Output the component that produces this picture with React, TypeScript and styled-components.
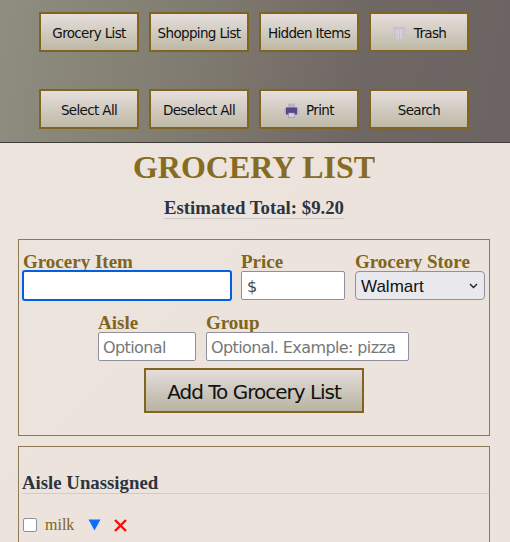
import styled, { createGlobalStyle } from "styled-components";

const GlobalStyle = createGlobalStyle`
  html, body {
    margin: 0;
    padding: 0;
    height: 542px;
    overflow: hidden;
  }
  body {
    background: linear-gradient(135deg, #ede5df 0%, #ebe3dc 50%, #ebe4dd 100%);
    font-family: "Liberation Serif", "Times New Roman", serif;
  }
`;

const Header = styled.header`
  display: grid;
  grid-template-columns: repeat(4, 100px);
  column-gap: 10px;
  row-gap: 37px;
  padding: 12px 0 13px 39px;
  background: linear-gradient(100deg, #8f8e80 0%, #7f7a6f 40%, #6f6764 70%, #6b6462 100%);
  border-bottom: 1px solid #3f3a38;
`;

const NavButton = styled.button`
  display: flex;
  align-items: center;
  justify-content: center;
  gap: 7px;
  height: 40px;
  margin: 0;
  padding: 2px 0 0;
  box-sizing: border-box;
  border: 2px solid #7f6520;
  background: linear-gradient(180deg, #e6dedd 0%, #bdb9a5 100%);
  color: #111;
  font-family: "DejaVu Sans", Verdana, sans-serif;
  font-size: 13.5px;
  letter-spacing: -0.65px;
  white-space: nowrap;
`;

const Main = styled.main`
  padding: 0 20px 0 18px;
`;

const Title = styled.h1`
  margin: 5px 0 0;
  text-align: center;
  color: #866b22;
  font-size: 32px;
  line-height: 38px;
  font-weight: 700;
`;

const TotalRow = styled.div`
  display: flex;
  justify-content: center;
  margin-top: 12px;
`;

const Total = styled.span`
  color: #2c3440;
  font-size: 18.8px;
  line-height: 20px;
  font-weight: 700;
  border-bottom: 1px solid #c9c8c8;
`;

const Box = styled.section`
  box-sizing: border-box;
  width: 472px;
  border: 1px solid #8b7a55;
`;

const FormBox = styled(Box)`
  margin-top: 20px;
  height: 197px;
  padding: 11px 4px 0;
`;

const FieldRow = styled.div<{ $indent?: number }>`
  display: flex;
  gap: 10px;
  padding-left: ${({ $indent }) => $indent ?? 0}px;

  & + & {
    margin-top: 12px;
  }
`;

const Field = styled.label`
  display: flex;
  flex-direction: column;
`;

const FieldLabel = styled.span`
  margin-bottom: -2px;
  color: #7f6520;
  font-size: 19px;
  line-height: 22px;
  font-weight: 700;
  white-space: nowrap;
`;

const TextInput = styled.input<{ $width: number; $focused?: boolean }>`
  box-sizing: border-box;
  width: ${({ $width }) => $width}px;
  height: 29px;
  margin: 0;
  padding: 2px 4px 0;
  background: #fff;
  border: 1px solid #8f8f9d;
  border-radius: 2px;
  color: #444;
  font-family: "DejaVu Sans", Verdana, sans-serif;
  font-size: 16px;
  letter-spacing: -0.6px;
  outline: none;

  &::placeholder {
    color: #777;
    opacity: 1;
  }

  ${({ $focused }) =>
    $focused &&
    `
    height: 31px;
    margin: -1px -1px -1px -1px;
    border: 2px solid #0060df;
    border-radius: 3px;
  `}
`;

const PriceInput = styled(TextInput)`
  padding-left: 5px;
`;

const StoreSelect = styled.select`
  appearance: none;
  box-sizing: border-box;
  width: 130px;
  height: 29px;
  margin: 0;
  padding: 2px 1px 0 5px;
  background: #e9e9ed
    url("data:image/svg+xml,%3Csvg xmlns='http://www.w3.org/2000/svg' width='9' height='6'%3E%3Cpath d='M1 1l3.5 3.5L8 1' fill='none' stroke='%23222' stroke-width='1.4'/%3E%3C/svg%3E")
    no-repeat right 6px center;
  border: 1px solid #8f8f9d;
  border-radius: 4px;
  color: #111;
  font-family: "Liberation Sans", Arial, sans-serif;
  font-size: 17px;
`;

const SubmitRow = styled.div`
  display: flex;
  justify-content: center;
  margin-top: 7px;
`;

const SubmitButton = styled.button`
  box-sizing: border-box;
  width: 220px;
  height: 45px;
  margin: 0;
  padding: 2px 0 0;
  border: 2px solid #7f6520;
  background: linear-gradient(180deg, #e3dcdb 0%, #b8b4a0 100%);
  color: #111;
  font-family: "DejaVu Sans", Verdana, sans-serif;
  font-size: 20px;
  letter-spacing: -1px;
`;

const ListBox = styled(Box)`
  margin-top: 10px;
  height: 140px;
  padding: 26px 0 0 3px;
`;

const AisleHeading = styled.h3`
  margin: 0;
  color: #2c3440;
  font-size: 18.8px;
  line-height: 20px;
  font-weight: 700;
  border-bottom: 1px solid #d0ccc6;
`;

const ItemRow = styled.div`
  display: flex;
  align-items: center;
  margin-top: 21px;
  height: 20px;
`;

const Check = styled.input`
  appearance: none;
  box-sizing: border-box;
  width: 14px;
  height: 14px;
  margin: 0 8px 0 1px;
  background: #fff;
  border: 1px solid #8f8f9d;
  border-radius: 2px;
`;

const ItemName = styled.span`
  width: 43px;
  color: #7f6520;
  font-size: 16px;
`;

const ItemAction = styled.button`
  display: flex;
  width: 26px;
  margin: 0;
  padding: 0;
  border: none;
  background: none;
`;

function TrashIcon() {
  return (
    <svg width="15" height="15" viewBox="0 0 15 15">
      <path d="M1 1h13v1.5h-.8l-1 12H2.8l-1-12H1z" fill="#c6c1cd" />
      <path d="M3.5 3.5h8l-.6 9.5H4.1z" fill="#d8d4da" />
      <path d="M4.5 4l1 9M7.5 4v9M10.5 4l-1 9" stroke="#bdb8c4" strokeWidth=".7" />
    </svg>
  );
}

function PrintIcon() {
  return (
    <svg width="15" height="15" viewBox="0 0 15 15">
      <path d="M4 0.5h7v5H4z" fill="#b9b4c6" />
      <rect x="0.5" y="4.5" width="14" height="7" rx="1.5" fill="#b3abcc" />
      <rect x="2" y="4.5" width="11" height="7" fill="#594688" />
      <path d="M4.5 10h6v4.5h-6z" fill="#d6d2dc" stroke="#8f86a8" strokeWidth=".6" />
    </svg>
  );
}

function DownIcon() {
  return (
    <svg width="13" height="12" viewBox="0 0 13 12">
      <path d="M0.5 0.5h12L6.5 11.5z" fill="#0d6efd" />
    </svg>
  );
}

function CrossIcon() {
  return (
    <svg width="13" height="13" viewBox="0 0 13 13">
      <path d="M1 1l11 11M12 1L1 12" stroke="#f01010" strokeWidth="2.4" fill="none" />
    </svg>
  );
}

const NAV = [
  { label: "Grocery List" },
  { label: "Shopping List" },
  { label: "Hidden Items" },
  { label: "Trash", icon: <TrashIcon /> },
  { label: "Select All" },
  { label: "Deselect All" },
  { label: "Print", icon: <PrintIcon /> },
  { label: "Search" },
];

export default function App() {
  return (
    <>
      <GlobalStyle />
      <Header>
        {NAV.map((item) => (
          <NavButton key={item.label}>
            {item.icon}
            {item.label}
          </NavButton>
        ))}
      </Header>
      <Main>
        <Title>GROCERY LIST</Title>
        <TotalRow>
          <Total>Estimated Total: $9.20</Total>
        </TotalRow>
        <FormBox>
          <FieldRow>
            <Field>
              <FieldLabel>Grocery Item</FieldLabel>
              <TextInput $width={210} $focused />
            </Field>
            <Field>
              <FieldLabel>Price</FieldLabel>
              <PriceInput $width={104} defaultValue="$" />
            </Field>
            <Field>
              <FieldLabel>Grocery Store</FieldLabel>
              <StoreSelect defaultValue="Walmart">
                <option>Walmart</option>
              </StoreSelect>
            </Field>
          </FieldRow>
          <FieldRow $indent={75}>
            <Field>
              <FieldLabel>Aisle</FieldLabel>
              <TextInput $width={98} placeholder="Optional" />
            </Field>
            <Field>
              <FieldLabel>Group</FieldLabel>
              <TextInput $width={203} placeholder="Optional. Example: pizza" />
            </Field>
          </FieldRow>
          <SubmitRow>
            <SubmitButton>Add To Grocery List</SubmitButton>
          </SubmitRow>
        </FormBox>
        <ListBox>
          <AisleHeading>Aisle Unassigned</AisleHeading>
          <ItemRow>
            <Check type="checkbox" />
            <ItemName>milk</ItemName>
            <ItemAction>
              <DownIcon />
            </ItemAction>
            <ItemAction>
              <CrossIcon />
            </ItemAction>
          </ItemRow>
        </ListBox>
      </Main>
    </>
  );
}
